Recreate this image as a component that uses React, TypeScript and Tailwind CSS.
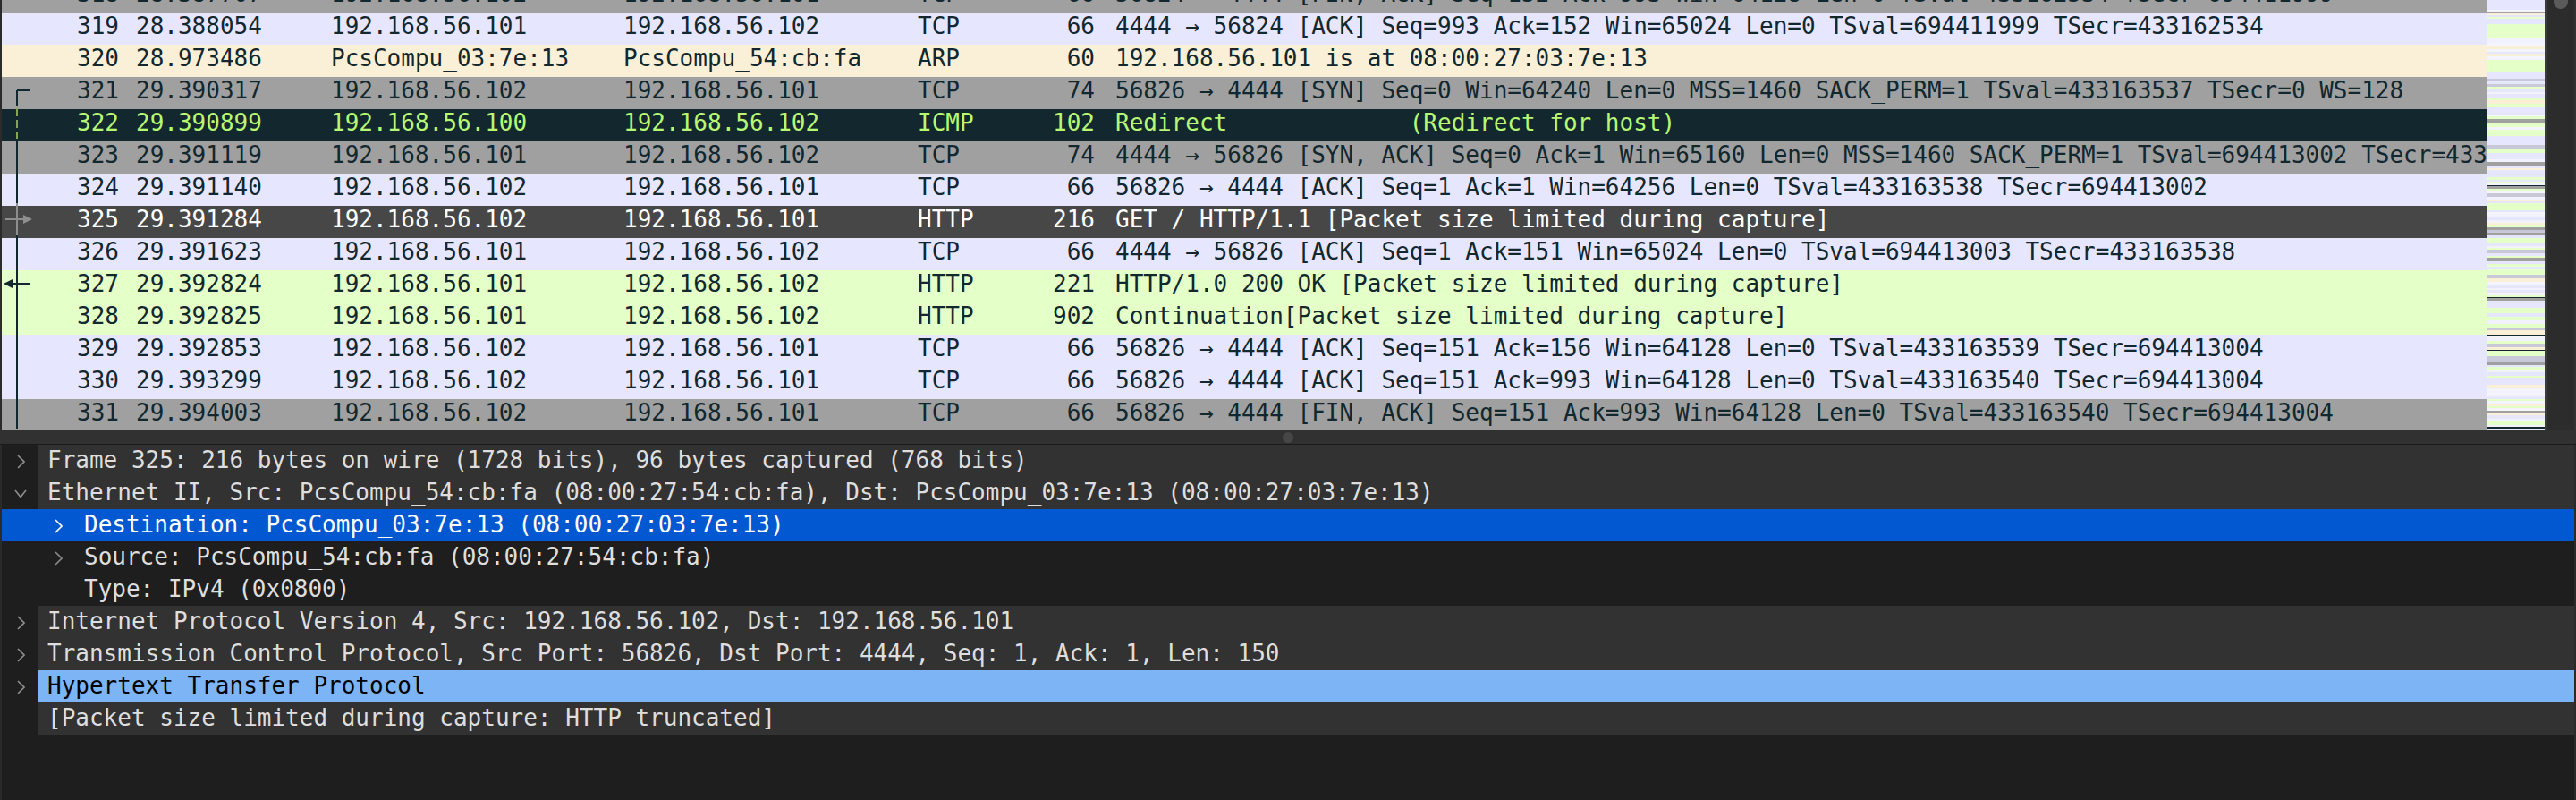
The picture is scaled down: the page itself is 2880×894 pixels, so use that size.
import type { ReactNode } from "react";

type Tone = "tcp" | "synfin" | "arp" | "icmp" | "http" | "selected";
type Mark = "none" | "start" | "dash" | "line" | "request" | "response";

type Packet = {
  no: number;
  time: string;
  src: string;
  dst: string;
  proto: string;
  len: number;
  info: string;
  tone: Tone;
  mark: Mark;
};

const PACKETS: Packet[] = [
  { no: 318, time: "28.387707", src: "192.168.56.102", dst: "192.168.56.101", proto: "TCP", len: 66, info: "56824 → 4444 [FIN, ACK] Seq=152 Ack=993 Win=64128 Len=0 TSval=433162534 TSecr=694411999", tone: "synfin", mark: "none" },
  { no: 319, time: "28.388054", src: "192.168.56.101", dst: "192.168.56.102", proto: "TCP", len: 66, info: "4444 → 56824 [ACK] Seq=993 Ack=152 Win=65024 Len=0 TSval=694411999 TSecr=433162534", tone: "tcp", mark: "none" },
  { no: 320, time: "28.973486", src: "PcsCompu_03:7e:13", dst: "PcsCompu_54:cb:fa", proto: "ARP", len: 60, info: "192.168.56.101 is at 08:00:27:03:7e:13", tone: "arp", mark: "none" },
  { no: 321, time: "29.390317", src: "192.168.56.102", dst: "192.168.56.101", proto: "TCP", len: 74, info: "56826 → 4444 [SYN] Seq=0 Win=64240 Len=0 MSS=1460 SACK_PERM=1 TSval=433163537 TSecr=0 WS=128", tone: "synfin", mark: "start" },
  { no: 322, time: "29.390899", src: "192.168.56.100", dst: "192.168.56.102", proto: "ICMP", len: 102, info: "Redirect             (Redirect for host)", tone: "icmp", mark: "dash" },
  { no: 323, time: "29.391119", src: "192.168.56.101", dst: "192.168.56.102", proto: "TCP", len: 74, info: "4444 → 56826 [SYN, ACK] Seq=0 Ack=1 Win=65160 Len=0 MSS=1460 SACK_PERM=1 TSval=694413002 TSecr=433163537", tone: "synfin", mark: "line" },
  { no: 324, time: "29.391140", src: "192.168.56.102", dst: "192.168.56.101", proto: "TCP", len: 66, info: "56826 → 4444 [ACK] Seq=1 Ack=1 Win=64256 Len=0 TSval=433163538 TSecr=694413002", tone: "tcp", mark: "line" },
  { no: 325, time: "29.391284", src: "192.168.56.102", dst: "192.168.56.101", proto: "HTTP", len: 216, info: "GET / HTTP/1.1 [Packet size limited during capture]", tone: "selected", mark: "request" },
  { no: 326, time: "29.391623", src: "192.168.56.101", dst: "192.168.56.102", proto: "TCP", len: 66, info: "4444 → 56826 [ACK] Seq=1 Ack=151 Win=65024 Len=0 TSval=694413003 TSecr=433163538", tone: "tcp", mark: "line" },
  { no: 327, time: "29.392824", src: "192.168.56.101", dst: "192.168.56.102", proto: "HTTP", len: 221, info: "HTTP/1.0 200 OK [Packet size limited during capture]", tone: "http", mark: "response" },
  { no: 328, time: "29.392825", src: "192.168.56.101", dst: "192.168.56.102", proto: "HTTP", len: 902, info: "Continuation[Packet size limited during capture]", tone: "http", mark: "line" },
  { no: 329, time: "29.392853", src: "192.168.56.102", dst: "192.168.56.101", proto: "TCP", len: 66, info: "56826 → 4444 [ACK] Seq=151 Ack=156 Win=64128 Len=0 TSval=433163539 TSecr=694413004", tone: "tcp", mark: "line" },
  { no: 330, time: "29.393299", src: "192.168.56.102", dst: "192.168.56.101", proto: "TCP", len: 66, info: "56826 → 4444 [ACK] Seq=151 Ack=993 Win=64128 Len=0 TSval=433163540 TSecr=694413004", tone: "tcp", mark: "line" },
  { no: 331, time: "29.394003", src: "192.168.56.102", dst: "192.168.56.101", proto: "TCP", len: 66, info: "56826 → 4444 [FIN, ACK] Seq=151 Ack=993 Win=64128 Len=0 TSval=433163540 TSecr=694413004", tone: "synfin", mark: "line" },
];

const TONES: Record<Tone, { row: string; line: string }> = {
  tcp: { row: "bg-[#e7e6ff] text-[#12272e]", line: "#12272e" },
  synfin: { row: "bg-[#a0a0a0] text-[#12272e]", line: "#12272e" },
  arp: { row: "bg-[#faf0d7] text-[#12272e]", line: "#12272e" },
  icmp: { row: "bg-[#12272e] text-[#b7f774]", line: "#7fa653" },
  http: { row: "bg-[#e4ffc7] text-[#12272e]", line: "#12272e" },
  selected: { row: "bg-[#474747] text-white", line: "#8e8e8e" },
};

// conversation brackets in the left margin of the packet list
function ConversationMark({ mark, color }: { mark: Mark; color: string }) {
  return (
    <svg width="60" height="36" className="shrink-0">
      {mark === "start" && <path d="M17 18 V36 M17 18 H32" stroke={color} strokeWidth="2" fill="none" />}
      {mark === "dash" && <path d="M17 2 V36" stroke={color} strokeWidth="2" strokeDasharray="9 4" fill="none" />}
      {mark === "line" && <path d="M17 0 V36" stroke={color} strokeWidth="2" fill="none" />}
      {mark === "request" && (
        <>
          <path d="M17 0 V36 M4 18 H25" stroke={color} strokeWidth="2" fill="none" />
          <path d="M24 13 L34 18 L24 23 Z" fill={color} />
        </>
      )}
      {mark === "response" && (
        <>
          <path d="M17 0 V36 M10 18 H32" stroke={color} strokeWidth="2" fill="none" />
          <path d="M12 13 L2 18 L12 23 Z" fill={color} />
        </>
      )}
    </svg>
  );
}

function PacketRow({ p }: { p: Packet }) {
  const tone = TONES[p.tone];
  return (
    <div className={`flex h-[36px] items-center whitespace-pre pb-[6px] ${tone.row}`}>
      <ConversationMark mark={p.mark} color={tone.line} />
      <div className="w-[71px] shrink-0 text-right">{p.no}</div>
      <div className="w-[237px] shrink-0 pl-[19px]">{p.time}</div>
      <div className="w-[327px] shrink-0">{p.src}</div>
      <div className="w-[329px] shrink-0">{p.dst}</div>
      <div className="w-[124px] shrink-0">{p.proto}</div>
      <div className="w-[74px] shrink-0 text-right">{p.len}</div>
      <div className="pl-[23px]">{p.info}</div>
    </div>
  );
}

const STRIPE_COLORS = ["#e7e6ff", "#e7e6ff", "#f2f2ff", "#e4ffc7", "#e4ffc7", "#a0a0a0", "#e7e6ff", "#faf0d7", "#c8c8d8", "#e4ffc7", "#f4f4ff"];

function buildStripes() {
  let seed = 17;
  const rand = () => {
    seed = (seed * 9301 + 49297) % 233280;
    return seed / 233280;
  };
  const out: { y: number; h: number; c: string }[] = [];
  let y = 0;
  while (y < 478) {
    if (rand() < 0.035) {
      out.push({ y, h: 1, c: "#12272e" });
      y += 1;
      continue;
    }
    const h = 2 + Math.floor(rand() * 3);
    out.push({ y, h, c: STRIPE_COLORS[Math.floor(rand() * STRIPE_COLORS.length)] });
    y += h;
  }
  return out;
}

const STRIPES = buildStripes();

function Minimap() {
  return (
    <div className="w-[67px] shrink-0 border-r-[3px] border-[#3b3b3b] bg-[#e7e6ff]">
      <svg width="64" height="480">
        {STRIPES.map((s, i) => (
          <rect key={i} x="0" y={s.y} width="64" height={s.h} fill={s.c} />
        ))}
        <rect x="0" y="477" width="64" height="2" fill="#12272e" />
      </svg>
    </div>
  );
}

function Chevron({ open, color }: { open?: boolean; color: string }) {
  return open ? (
    <svg width="14" height="10" viewBox="0 0 14 10">
      <path d="M1 1 L7 8.5 L13 1" stroke={color} strokeWidth="1.6" fill="none" />
    </svg>
  ) : (
    <svg width="9" height="16" viewBox="0 0 9 16">
      <path d="M1 1 L8 8 L1 15" stroke={color} strokeWidth="1.6" fill="none" />
    </svg>
  );
}

type Node = {
  text: string;
  depth: 0 | 1;
  chevron?: "closed" | "open";
  look?: "plain" | "selected" | "highlight" | "dim";
};

const TREE: Node[] = [
  { text: "Frame 325: 216 bytes on wire (1728 bits), 96 bytes captured (768 bits)", depth: 0, chevron: "closed" },
  { text: "Ethernet II, Src: PcsCompu_54:cb:fa (08:00:27:54:cb:fa), Dst: PcsCompu_03:7e:13 (08:00:27:03:7e:13)", depth: 0, chevron: "open" },
  { text: "Destination: PcsCompu_03:7e:13 (08:00:27:03:7e:13)", depth: 1, chevron: "closed", look: "selected" },
  { text: "Source: PcsCompu_54:cb:fa (08:00:27:54:cb:fa)", depth: 1, chevron: "closed", look: "dim" },
  { text: "Type: IPv4 (0x0800)", depth: 1, look: "dim" },
  { text: "Internet Protocol Version 4, Src: 192.168.56.102, Dst: 192.168.56.101", depth: 0, chevron: "closed" },
  { text: "Transmission Control Protocol, Src Port: 56826, Dst Port: 4444, Seq: 1, Ack: 1, Len: 150", depth: 0, chevron: "closed" },
  { text: "Hypertext Transfer Protocol", depth: 0, chevron: "closed", look: "highlight" },
  { text: "[Packet size limited during capture: HTTP truncated]", depth: 0 },
];

function TreeRow({ node }: { node: Node }) {
  const look = node.look ?? "plain";
  let body: ReactNode;

  if (node.depth === 1) {
    const selected = look === "selected";
    body = (
      <div className={`flex h-full flex-1 items-center ${selected ? "bg-[#0158d0] text-white" : "text-[#dedede]"}`}>
        <div className="flex w-[92px] shrink-0 items-center pl-[59px] pt-[2px]">
          {node.chevron && <Chevron color={selected ? "#ffffff" : "#8a8a8a"} />}
        </div>
        <span className="pb-[3px]">{node.text}</span>
      </div>
    );
  } else {
    body = (
      <>
        <div className="flex w-[40px] shrink-0 items-center justify-center pl-[2px] pt-[2px]">
          {node.chevron && <Chevron open={node.chevron === "open"} color="#8e8e8e" />}
        </div>
        <div
          className={`flex h-full flex-1 items-center pb-[3px] pl-[11px] ${
            look === "highlight" ? "bg-[#7db4f6] text-black" : "bg-[#323232] text-[#dedede]"
          }`}
        >
          {node.text}
        </div>
      </>
    );
  }

  return <div className="flex h-[36px] items-center whitespace-pre">{body}</div>;
}

export default function App() {
  return (
    <div className="flex h-[894px] w-[2880px] flex-col overflow-hidden bg-[#1e1e1e] font-['DejaVu_Sans_Mono',monospace] text-[26px] leading-[30px]">
      <div className="flex h-[480px] shrink-0 border-l-2 border-[#2b2b2b]">
        <div className="min-w-0 flex-1 overflow-hidden">
          <div className="-mt-[22px]">
            {PACKETS.map((p) => (
              <PacketRow key={p.no} p={p} />
            ))}
          </div>
        </div>
        <Minimap />
        <div className="w-[30px] shrink-0 bg-[#2c2c2c]">
          <div className="mx-auto h-[10px] w-[16px] rounded-b-full bg-[#5a5a5a]" />
        </div>
        <div className="w-[2px] shrink-0 bg-[#333333]" />
      </div>

      <div className="flex h-[17px] shrink-0 items-center justify-center border-y border-[#1a1a1a] bg-[#313131]">
        <div className="size-[12px] rounded-full bg-[#474747]" />
      </div>

      <div className="flex-1 border-l-2 border-r-2 border-[#2b2b2b]">
        {TREE.map((node, i) => (
          <TreeRow key={i} node={node} />
        ))}
      </div>
    </div>
  );
}
